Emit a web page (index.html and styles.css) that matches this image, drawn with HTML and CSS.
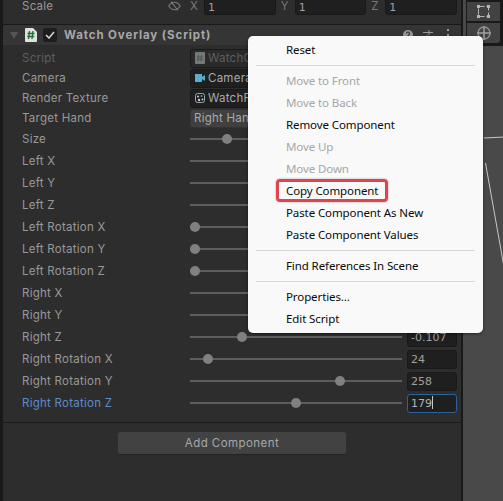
FILE: index.html
```html
<!DOCTYPE html>
<html lang="en">
  <head>
    <meta charset="UTF-8" />
    <title>Watch Overlay Inspector</title>
    <link rel="stylesheet" href="styles.css">
  </head>
  <body>
    <div class="app">
      <div class="edge"></div>

      <div class="inspector">
        <div class="scale-row">
          <span class="label">Scale</span>
          <svg class="eye" width="13" height="10" viewBox="0 0 13 10">
            <path d="M.7 5c1.800-2.600 3.700-3.800 5.800-3.800s4 1.200 5.800 3.800c-1.800 2.600-3.700 3.800-5.800 3.800S2.500 7.600.700 5z" fill="none" stroke="#7d7d7d" stroke-width="1.100"/>
            <path d="M3 .5l7 9" stroke="#7d7d7d" stroke-width="1.100"/>
          </svg>
          <div class="axes">
            <div class="axis"><span class="axis-name">X</span><span class="field">1</span></div>
            <div class="axis"><span class="axis-name">Y</span><span class="field">1</span></div>
            <div class="axis"><span class="axis-name">Z</span><span class="field">1</span></div>
          </div>
        </div>

        <div class="comp-header">
          <span class="fold"></span>
          <svg class="script-icon" width="12" height="14" viewBox="0 0 12 14">
            <path d="M0 1a1 1 0 0 1 1-1h7l4 4v9a1 1 0 0 1-1 1H1a1 1 0 0 1-1-1z" fill="#dfe3dc"/>
            <path d="M4.500 3l-1 8M8 3l-1 8M2.500 5.500h7M2.300 8.500h7" stroke="#1f6b35" stroke-width="1.300"/>
          </svg>
          <span class="checkbox">
            <svg width="10" height="8" viewBox="0 0 10 8"><path d="M1 4l3 3 5-6" fill="none" stroke="#d8d8d8" stroke-width="1.500"/></svg>
          </span>
          <span class="comp-title">Watch Overlay (Script)</span>
          <svg class="head-icon" width="50" height="14" viewBox="0 0 50 14">
            <circle cx="5" cy="7" r="5" fill="#9a9a9a"/>
            <path d="M3.500 5.500a1.500 1.500 0 1 1 2.300 1.300c-.6.400-.8.700-.8 1.400" fill="none" stroke="#333" stroke-width="1.200"/>
            <path d="M20 4.500h10M20 9.500h10M26 2v5M24 7v5" stroke="#9a9a9a"/>
            <path d="M45 1v2M45 6v2M45 11v2" stroke="#9a9a9a" stroke-width="2"/>
          </svg>
        </div>

        <div class="props">
          <div class="row row-obj">
            <span class="label dim">Script</span>
            <span class="ref ref-dim">
              <svg width="10" height="12" viewBox="0 0 10 12"><rect width="10" height="12" rx="1" fill="#777"/><path d="M3.500 3l-.6 6M6.500 3l-.6 6M2 5h6M2 7.500h6" stroke="#3f5f48"/></svg>
              WatchO
            </span>
          </div>
          <div class="row row-obj">
            <span class="label">Camera</span>
            <span class="ref">
              <svg width="10" height="8" viewBox="0 0 10 8"><rect width="7" height="8" fill="#58aed0"/><path d="M7 3l3-2v6L7 5z" fill="#58aed0"/></svg>
              Camera
            </span>
          </div>
          <div class="row row-obj">
            <span class="label">Render Texture</span>
            <span class="ref">
              <svg width="10" height="10" viewBox="0 0 10 10"><rect x=".5" y=".5" width="9" height="9" rx="2" fill="none" stroke="#8fa8b4"/><circle cx="3" cy="3.500" r="1" fill="#ccc"/><circle cx="6.500" cy="3" r=".8" fill="#ccc"/><circle cx="4" cy="7" r="1.200" fill="#ccc"/><circle cx="7.500" cy="6.500" r="1" fill="#ccc"/></svg>
              WatchR
            </span>
          </div>
          <div class="row row-obj">
            <span class="label">Target Hand</span>
            <span class="dropdown">Right Han</span>
          </div>

          <div class="row">
            <span class="label">Size</span>
            <div class="slider"><i class="track"></i><i class="thumb at-size"></i></div>
            <span class="field"></span>
          </div>
          <div class="row">
            <span class="label">Left X</span>
            <div class="slider"><i class="track"></i></div>
            <span class="field"></span>
          </div>
          <div class="row">
            <span class="label">Left Y</span>
            <div class="slider"><i class="track"></i></div>
            <span class="field"></span>
          </div>
          <div class="row">
            <span class="label">Left Z</span>
            <div class="slider"><i class="track"></i></div>
            <span class="field"></span>
          </div>
          <div class="row">
            <span class="label">Left Rotation X</span>
            <div class="slider"><i class="track"></i><i class="thumb at-start"></i></div>
            <span class="field"></span>
          </div>
          <div class="row">
            <span class="label">Left Rotation Y</span>
            <div class="slider"><i class="track"></i><i class="thumb at-start"></i></div>
            <span class="field"></span>
          </div>
          <div class="row">
            <span class="label">Left Rotation Z</span>
            <div class="slider"><i class="track"></i><i class="thumb at-start"></i></div>
            <span class="field"></span>
          </div>
          <div class="row">
            <span class="label">Right X</span>
            <div class="slider"><i class="track"></i></div>
            <span class="field"></span>
          </div>
          <div class="row">
            <span class="label">Right Y</span>
            <div class="slider"><i class="track"></i></div>
            <span class="field"></span>
          </div>
          <div class="row">
            <span class="label">Right Z</span>
            <div class="slider"><i class="track"></i><i class="thumb at-rz"></i></div>
            <span class="field">-0.107</span>
          </div>
          <div class="row">
            <span class="label">Right Rotation X</span>
            <div class="slider"><i class="track"></i><i class="thumb at-rrx"></i></div>
            <span class="field">24</span>
          </div>
          <div class="row">
            <span class="label">Right Rotation Y</span>
            <div class="slider"><i class="track"></i><i class="thumb at-rry"></i></div>
            <span class="field">258</span>
          </div>
          <div class="row">
            <span class="label active">Right Rotation Z</span>
            <div class="slider"><i class="track"></i><i class="thumb at-rrz"></i></div>
            <span class="field focused">179<i class="caret"></i></span>
          </div>
        </div>

        <div class="add-wrap">
          <button class="add-btn" type="button">Add Component</button>
        </div>
      </div>

      <div class="divider"></div>

      <div class="scene">
        <div class="tools">
          <div class="tool">
            <svg width="13" height="13" viewBox="0 0 13 13">
              <path d="M1.500 1.500h10v10h-10z" fill="none" stroke="#b5b5b5" stroke-dasharray="6 2"/>
              <path d="M0 0h3v3H0zM10 0h3v3h-3zM0 10h3v3H0zM10 10h3v3h-3z" fill="#b5b5b5"/>
            </svg>
          </div>
          <div class="tool tool-last">
            <svg width="16" height="16" viewBox="0 0 16 16">
              <circle cx="8" cy="8" r="6" fill="none" stroke="#8c8c8c" stroke-width="1.500"/>
              <path d="M8 1v14M1 8h14" stroke="#a0a0a0" stroke-width="1.500"/>
            </svg>
          </div>
        </div>
        <svg class="scene-lines" width="20" height="280" viewBox="0 0 20 280">
          <path d="M0 138l20-1M1.500 163l18.500 104" fill="none" stroke="#c8c8c8"/>
        </svg>
      </div>

      <div class="menu">
        <div class="item">Reset</div>
        <div class="sep"></div>
        <div class="item off">Move to Front</div>
        <div class="item off">Move to Back</div>
        <div class="item">Remove Component</div>
        <div class="item off">Move Up</div>
        <div class="item off">Move Down</div>
        <div class="item marked">Copy Component</div>
        <div class="item">Paste Component As New</div>
        <div class="item">Paste Component Values</div>
        <div class="sep"></div>
        <div class="item">Find References In Scene</div>
        <div class="sep"></div>
        <div class="item">Properties...</div>
        <div class="item">Edit Script</div>
      </div>
    </div>
  </body>
</html>
```

FILE: styles.css
```css
html,
body {
  margin: 0;
  height: 100%;
  overflow: hidden;
  background: #2d2d2d;
}

.app {
  position: relative;
  display: flex;
  height: 501px;
  width: 503px;
  overflow: hidden;
  font-family: Inter, "Liberation Sans", sans-serif;
  font-size: 11.5px;
  letter-spacing: 0.25px;
  color: #999;
}

.edge {
  flex: 0 0 3px;
  background: #191919;
}

.inspector {
  flex: 0 0 458px;
  background: #2d2d2d;
}

.divider {
  flex: 0 0 2px;
  background: #191919;
}

.scene {
  position: relative;
  flex: 1;
  background: #494949;
}

.label {
  flex: 0 0 168px;
  white-space: nowrap;
}

.dim {
  color: #5e5e5e;
}

.active {
  color: #5c8ccb;
}

/* top transform row */
.scale-row {
  display: flex;
  align-items: flex-start;
  height: 25px;
  box-sizing: border-box;
  padding: 0 4px 0 19px;
  line-height: 13px;
  border-bottom: 1px solid #191919;
}

.eye {
  margin: 1px 9px 0 -22px;
}

.axes {
  flex: 1;
  display: grid;
  grid-template-columns: repeat(3, 1fr);
  gap: 5px;
}

.axis {
  display: flex;
  align-items: flex-start;
}

.axis-name {
  flex: 0 0 14px;
  color: #777;
}

.axis .field {
  flex: 1;
  margin-top: -4px;
  padding-top: 3px;
  line-height: 15px;
}

/* component header */
.comp-header {
  display: flex;
  align-items: center;
  height: 20px;
  padding-left: 7px;
  background: #353535;
}

.fold {
  width: 0;
  height: 0;
  border-left: 4px solid transparent;
  border-right: 4px solid transparent;
  border-top: 7px solid #555;
}

.script-icon {
  margin-left: 7px;
}

.checkbox {
  display: flex;
  align-items: center;
  justify-content: center;
  width: 14px;
  height: 14px;
  margin-left: 6px;
  background: #1d1d1d;
  border-radius: 2px;
}

.comp-title {
  margin-left: 7px;
  font-weight: 700;
  letter-spacing: 0.9px;
  color: #a8a8a8;
}

.head-icon {
  margin-left: auto;
  margin-right: 8px;
}

/* property rows */
.props {
  padding: 3px 4px 8px 19px;
  border-bottom: 1px solid #191919;
}

.row {
  display: flex;
  align-items: center;
  height: 22px;
}

.row-obj {
  height: 20px;
}

.ref,
.dropdown {
  display: flex;
  align-items: center;
  flex: 0 0 66px;
  gap: 3px;
  height: 19px;
  box-sizing: border-box;
  padding-left: 4px;
  background: #1f1f1f;
  border: 1px solid #191919;
  border-radius: 3px;
  color: #aaa;
  white-space: nowrap;
}

.ref svg {
  flex: none;
}

.ref-dim {
  background: #2a2a2a;
  color: #5e5e5e;
}

.dropdown {
  padding-left: 3px;
  background: #404040;
  border-color: #333;
}

.slider {
  position: relative;
  flex: 0 0 212px;
  height: 10px;
  margin-right: 5px;
}

.track {
  position: absolute;
  left: 0;
  right: 0;
  top: 4px;
  height: 2px;
  background: #5e5e5e;
}

.thumb {
  position: absolute;
  top: 0;
  width: 10px;
  height: 10px;
  border-radius: 50%;
  background: #808080;
}

.at-size { left: 32px; }
.at-start { left: 0; }
.at-rz { left: 47px; }
.at-rrx { left: 13px; }
.at-rry { left: 145px; }
.at-rrz { left: 101px; }

.field {
  display: block;
  flex: 1;
  height: 19px;
  box-sizing: border-box;
  padding-left: 3px;
  line-height: 17px;
  background: #1f1f1f;
  border: 1px solid #191919;
  border-radius: 3px;
  color: #a0a0a0;
  font-family: "DejaVu Sans", sans-serif;
  font-size: 11px;
  letter-spacing: 0;
}

.focused {
  border-color: #2a6299;
  color: #b4b4b4;
}

.caret {
  display: inline-block;
  width: 1px;
  height: 13px;
  vertical-align: -2px;
  background: #c8c8c8;
}

/* add component */
.add-wrap {
  display: flex;
  justify-content: center;
  padding-top: 9px;
}

.add-btn {
  width: 228px;
  height: 23px;
  padding: 0;
  background: #424242;
  border: 0;
  border-bottom: 1px solid #232323;
  border-radius: 3px;
  color: #a8a8a8;
  font-family: inherit;
  font-size: 11.5px;
  letter-spacing: 0.45px;
}

/* scene view */
.tools {
  margin-left: 3px;
  padding: 2px 3px 3px 1px;
  background: #191919;
  border-radius: 0 0 0 4px;
}

.tool {
  display: flex;
  align-items: center;
  justify-content: center;
  height: 19px;
  margin-bottom: 2px;
  background: #424242;
}

.tool-last {
  height: 20px;
  margin-bottom: 0;
  border-radius: 0 0 3px 3px;
}

.scene-lines {
  position: absolute;
  left: 21px;
  top: 0;
}

/* context menu */
.menu {
  position: absolute;
  left: 248px;
  top: 36px;
  width: 235px;
  padding: 3px 0;
  background: #f9f9f9;
  border-radius: 5px;
  box-shadow: 0 1px 3px rgba(0, 0, 0, 0.45);
  font-family: "Noto Sans", sans-serif;
  font-size: 11.5px;
  letter-spacing: -0.1px;
  color: #0a0a0a;
}

.item {
  position: relative;
  height: 22px;
  padding-left: 38px;
  line-height: 22px;
  white-space: nowrap;
}

.off {
  color: #a6a6a6;
}

.sep {
  height: 1px;
  margin: 4px 8px;
  background: #d8d8d8;
}

.marked::before {
  content: "";
  position: absolute;
  left: 28px;
  top: -1px;
  width: 106px;
  height: 17px;
  border: 3px solid #e0444f;
  border-radius: 4px;
  box-shadow: 0 0 2px rgba(0, 0, 0, 0.4);
}
```
